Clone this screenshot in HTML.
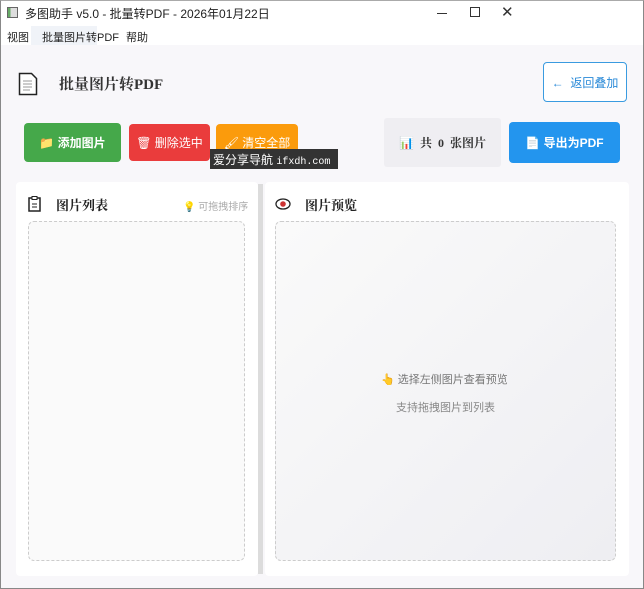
<!DOCTYPE html>
<html><head><meta charset="utf-8"><style>
*{margin:0;padding:0;box-sizing:border-box}
body{width:644px;height:589px;overflow:hidden;background:#fff;font-family:"Liberation Sans","Noto Sans CJK SC",sans-serif;position:relative;font-size:12px;color:#222}
.abs{position:absolute}
.win{left:0;top:0;width:644px;height:589px;border:1px solid #888;border-top-color:#aaa}
.btn{position:absolute;border-radius:4px;color:#fff;font-size:12px;font-weight:bold;display:flex;align-items:center;justify-content:center;gap:7px}
.ser{font-family:"Liberation Serif","Noto Serif CJK SC",serif;font-weight:bold}
</style></head><body>
<div class="abs win"></div>
<div class="abs" style="left:7px;top:7px;width:11px;height:11px;border:1px solid #666;background:linear-gradient(90deg,#6a6 0 30%,#ddd 30%)"></div>
<div class="abs" style="left:25px;top:5px;font-size:12px">多图助手 v5.0 - 批量转PDF - 2026年01月22日</div>
<div class="abs" style="left:437px;top:13px;width:10px;height:1px;background:#333"></div>
<div class="abs" style="left:470px;top:7px;width:10px;height:10px;border:1px solid #333"></div>
<div class="abs" style="left:501px;top:3px;font-size:15px;color:#333">✕</div>
<div class="abs" style="left:31px;top:26px;width:66px;height:19px;background:#f0f3f8"></div>
<div class="abs" style="left:7px;top:29px;font-size:11px">视图</div>
<div class="abs" style="left:42px;top:29px;font-size:11px">批量图片转PDF</div>
<div class="abs" style="left:126px;top:29px;font-size:11px">帮助</div>
<div class="abs" style="left:1px;top:45px;width:642px;height:543px;background:#f8f7fa"></div>
<svg class="abs" style="left:18px;top:72px" width="20" height="24"><path d="M1.5 1.5h12l5 5v16h-17z" fill="#fff" stroke="#222" stroke-width="1.5"/><path d="M5 9h9M5 12h9M5 15h9M5 18h7" stroke="#999"/></svg>
<div class="abs ser" style="left:59px;top:73px;font-size:15px;color:#333">批量图片转PDF</div>
<div class="abs" style="left:543px;top:62px;width:84px;height:40px;border:1px solid #3a9be0;border-radius:4px;background:#fff;color:#2a8ad8;font-size:12px;display:flex;align-items:center;justify-content:center">←&nbsp;&nbsp;返回叠加</div>
<div class="btn" style="left:24px;top:123px;width:97px;height:39px;background:#45a84a">📁 添加图片</div>
<div class="btn" style="left:129px;top:124px;width:81px;height:37px;background:#ea3c3c;font-weight:normal">🗑 删除选中</div>
<div class="btn" style="left:216px;top:124px;width:82px;height:37px;background:#fb9b0c;font-weight:normal">🖌 清空全部</div>
<div class="abs" style="left:210px;top:149px;width:128px;height:20px;background:#333;color:#fff;font-size:12px;padding:2px 3px;white-space:nowrap;overflow:hidden">爱分享导航 <span style="font-family:'Liberation Mono',monospace;font-size:10px">ifxdh.com</span></div>
<div class="abs ser" style="left:384px;top:118px;width:117px;height:49px;background:#efeef2;border-radius:3px;display:flex;align-items:center;justify-content:center;font-size:12px;color:#333">📊&nbsp; 共 &nbsp;0&nbsp; 张图片</div>
<div class="btn" style="left:509px;top:122px;width:111px;height:41px;background:#2395ee">📄 导出为PDF</div>
<div class="abs" style="left:16px;top:182px;width:242px;height:394px;background:#fff;border-radius:4px"></div>
<div class="abs" style="left:265px;top:182px;width:364px;height:394px;background:#fff;border-radius:4px"></div>
<div class="abs" style="left:258px;top:184px;width:5px;height:390px;background:#dcdcdc"></div>
<svg class="abs" style="left:28px;top:196px" width="13" height="16"><rect x="1" y="2" width="11" height="13" fill="none" stroke="#222" stroke-width="1.5"/><rect x="4" y="0.5" width="5" height="3" fill="#fff" stroke="#222"/><path d="M4 8h5M4 11h5" stroke="#222"/></svg>
<div class="abs ser" style="left:56px;top:195px;font-size:13px">图片列表</div>
<div class="abs" style="left:183px;top:198px;font-size:10px;color:#aaa">💡 可拖拽排序</div>
<svg class="abs" style="left:275px;top:197px" width="16" height="14"><ellipse cx="8" cy="7" rx="7" ry="5" fill="#fff" stroke="#222" stroke-width="1.3"/><circle cx="8" cy="7" r="2.8" fill="#c33"/></svg>
<div class="abs ser" style="left:305px;top:195px;font-size:13px">图片预览</div>
<div class="abs" style="left:28px;top:221px;width:217px;height:340px;border:1.5px dashed #ccc;border-radius:6px;background:#fafafa"></div>
<div class="abs" style="left:275px;top:221px;width:341px;height:340px;border:1.5px dashed #ccc;border-radius:6px;background:linear-gradient(135deg,#fafafa,#eeeef2)"></div>
<div class="abs" style="left:381px;top:371px;font-size:11px;color:#777">👆 选择左侧图片查看预览</div>
<div class="abs" style="left:396px;top:399px;font-size:11px;color:#888">支持拖拽图片到列表</div>
</body></html>
